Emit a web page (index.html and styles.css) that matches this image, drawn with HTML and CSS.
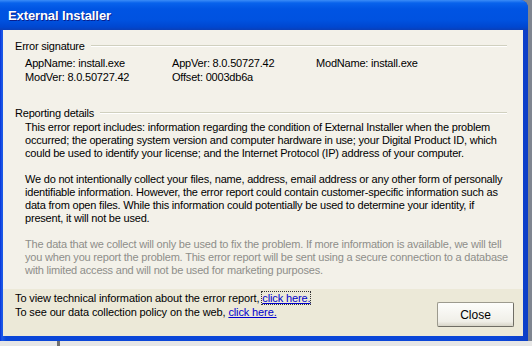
FILE: index.html
```html
<!DOCTYPE html>
<html lang="en">
<head>
    <meta charset="UTF-8">
    <title>External Installer</title>
    <link rel="stylesheet" href="styles.css">
</head>
<body>
    <div class="desktop">
        <div class="window">
            <div class="titlebar">External Installer</div>
            <div class="frame">
                <div class="panel">
                    <div class="group-head"><span>Error signature</span><i></i></div>
                    <div class="sig">
                        <span>AppName: install.exe</span>
                        <span>AppVer: 8.0.50727.42</span>
                        <span>ModName: install.exe</span>
                        <span>ModVer: 8.0.50727.42</span>
                        <span>Offset: 0003db6a</span>
                    </div>

                    <div class="group-head second"><span>Reporting details</span><i></i></div>
                    <p class="para">This error report includes: information regarding the condition of External Installer when the problem<br>
                        occurred; the operating system version and computer hardware in use; your Digital Product ID, which<br>
                        could be used to identify your license; and the Internet Protocol (IP) address of your computer.</p>
                    <p class="para">We do not intentionally collect your files, name, address, email address or any other form of personally<br>
                        identifiable information. However, the error report could contain customer-specific information such as<br>
                        data from open files. While this information could potentially be used to determine your identity, if<br>
                        present, it will not be used.</p>
                    <p class="para faded">The data that we collect will only be used to fix the problem. If more information is available, we will tell<br>
                        you when you report the problem. This error report will be sent using a secure connection to a database<br>
                        with limited access and will not be used for marketing purposes.</p>
                </div>
                <div class="footer">
                    <div class="links">
                        <div>To view technical information about the error report, <a href="#" class="focused">click here.</a></div>
                        <div>To see our data collection policy on the web, <a href="#">click here.</a></div>
                    </div>
                    <button type="button">Close</button>
                </div>
            </div>
        </div>
        <div class="taskbar"><i></i></div>
    </div>
</body>
</html>
```
FILE: styles.css
```css
body {
    margin: 0;
    background-color: #7f8590;
    font-family: "Liberation Sans", Arial, sans-serif;
    font-size: 11px;
    letter-spacing: -0.2px;
    color: #000;
}

.desktop {
    width: 532px;
    height: 346px;
    overflow: hidden;
}

.window {
    width: 528px;
    height: 341px;
    background: linear-gradient(to right, #0831d9 0, #1d5be8 2px, #0a46d8 6px, #0a46d8 95%, #0c3ec7 100%);
    border-radius: 0 8px 0 0;
    display: flex;
    flex-direction: column;
}

.titlebar {
    height: 30px;
    line-height: 31px;
    padding-left: 8px;
    color: #fff;
    font-weight: bold;
    font-size: 13px;
    letter-spacing: -0.1px;
    text-shadow: 1px 1px 0 #0a1e8c;
    border-radius: 0 8px 0 0;
    background: linear-gradient(to bottom, #3b8cf7 0, #0862ec 3px, #0054e3 9px, #0052e0 20px, #0047d0 27px, #0a3fb8 30px);
}

.frame {
    flex: 1;
    margin: 0 5px 5px 3px;
    display: flex;
    flex-direction: column;
}

.panel {
    background-color: #f3f1e9;
    padding: 9px 16px 12px 12px;
}

.group-head {
    display: flex;
    align-items: center;
    gap: 6px;
    line-height: 14px;
}

.group-head i {
    flex: 1;
    height: 1px;
    background-color: #d0d0bf;
    border-bottom: 1px solid #fff;
}

.group-head.second {
    margin-top: 22px;
}

.sig {
    display: grid;
    grid-template-columns: 147px 144px auto;
    padding-left: 10px;
    margin-top: 3px;
    line-height: 14px;
}

.para {
    margin: 1px 0 13px 10px;
    line-height: 13px;
    white-space: nowrap;
}

.para.faded {
    color: #8e8e8a;
    margin-bottom: 0;
}

.footer {
    flex: 1;
    background-color: #ece9d8;
    display: flex;
    justify-content: space-between;
    padding: 2px 9px 0 12px;
}

.links {
    line-height: 14px;
    letter-spacing: -0.12px;
}

.links a {
    color: #0000cc;
}

.links a.focused {
    outline: 1px dotted #333;
}

button {
    width: 77px;
    height: 25px;
    margin-top: 11px;
    font-family: inherit;
    font-size: 12px;
    background: linear-gradient(to bottom, #fdfdfb, #f0efe8 80%, #d8d5c8);
    border: 1px solid #9c9a8e;
    border-right-color: #6f6d65;
    border-bottom-color: #6f6d65;
    border-radius: 2px;
    padding: 0;
}

.taskbar {
    height: 5px;
    background-color: #e6e6e6;
    position: relative;
}

.taskbar i {
    position: absolute;
    left: 57px;
    top: 0;
    width: 3px;
    height: 5px;
    background-color: #707070;
}
```
